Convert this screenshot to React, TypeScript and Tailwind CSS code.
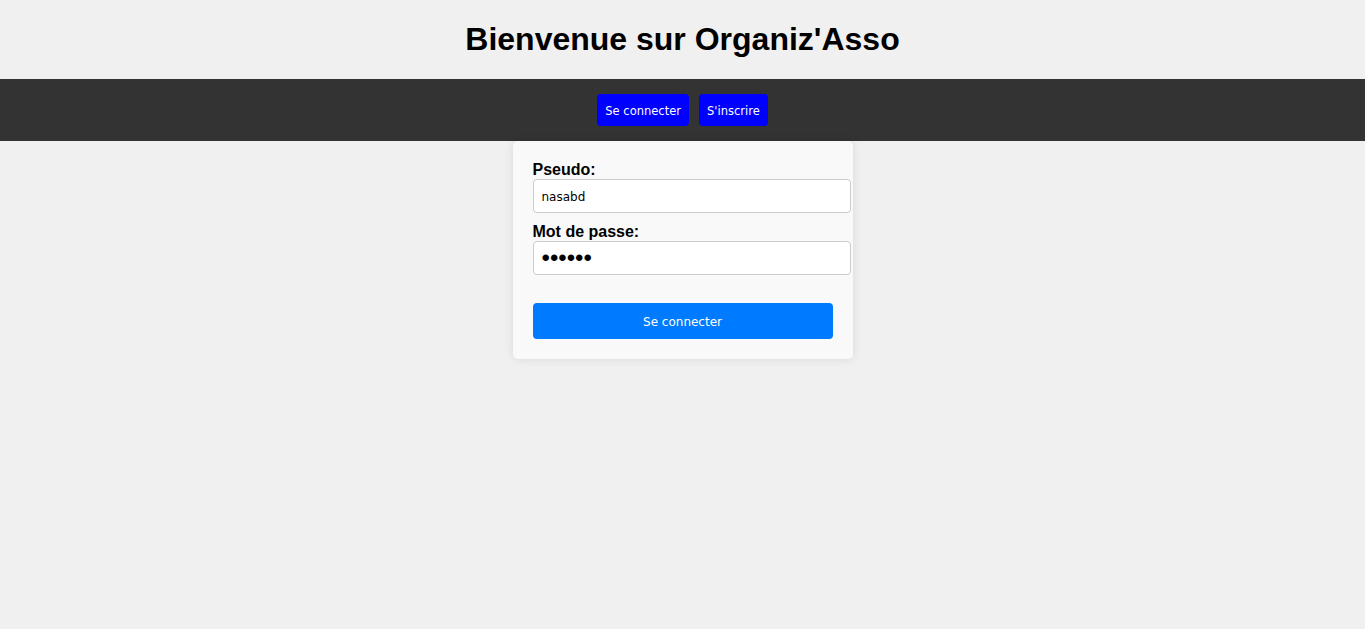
import React from "react";

export default function App() {
  return (
    <div className="min-h-[629px] bg-[#f0f0f0] font-['Liberation_Sans',Arial,sans-serif]">
      <div className="py-[21px]">
        <h1 className="text-center text-[32px] font-bold leading-[37px] text-black">
          Bienvenue sur Organiz'Asso
        </h1>
      </div>
      <nav className="flex h-[62px] items-center justify-center gap-[10px] bg-[#333333]">
        <button className="h-[32px] rounded-[4px] bg-[#0000ff] px-[8px] pt-[3px] font-['DejaVu_Sans',Verdana,sans-serif] text-[11.5px] text-white">
          Se connecter
        </button>
        <button className="h-[32px] rounded-[4px] bg-[#0000ff] px-[8px] pt-[3px] font-['DejaVu_Sans',Verdana,sans-serif] text-[11.5px] text-white">
          S'inscrire
        </button>
      </nav>
      <div className="mx-auto w-[340px] rounded-[5px] bg-[#f9f9f9] p-[20px] shadow-[0_0_10px_rgba(0,0,0,0.1)]">
        <label className="block text-[16px] font-bold leading-[18px] text-black">Pseudo:</label>
        <input
          type="text"
          defaultValue="nasabd"
          className="block h-[34px] w-[318px] rounded-[4px] border border-[#cccccc] bg-white px-[8px] pt-[2px] font-['DejaVu_Sans',Verdana,sans-serif] text-[12px] text-black outline-none"
        />
        <label className="mt-[10px] block text-[16px] font-bold leading-[18px] text-black">Mot de passe:</label>
        <input
          type="password"
          defaultValue="abcdef"
          className="block h-[34px] w-[318px] rounded-[4px] border border-[#cccccc] bg-white px-[8px] font-['Liberation_Sans',Arial,sans-serif] text-[24px] leading-[30px] text-black outline-none"
        />
        <button className="mt-[28px] block h-[36px] w-[300px] rounded-[4px] bg-[#007bff] pt-[2px] font-['DejaVu_Sans',Verdana,sans-serif] text-[12px] text-white">
          Se connecter
        </button>
      </div>
    </div>
  );
}
